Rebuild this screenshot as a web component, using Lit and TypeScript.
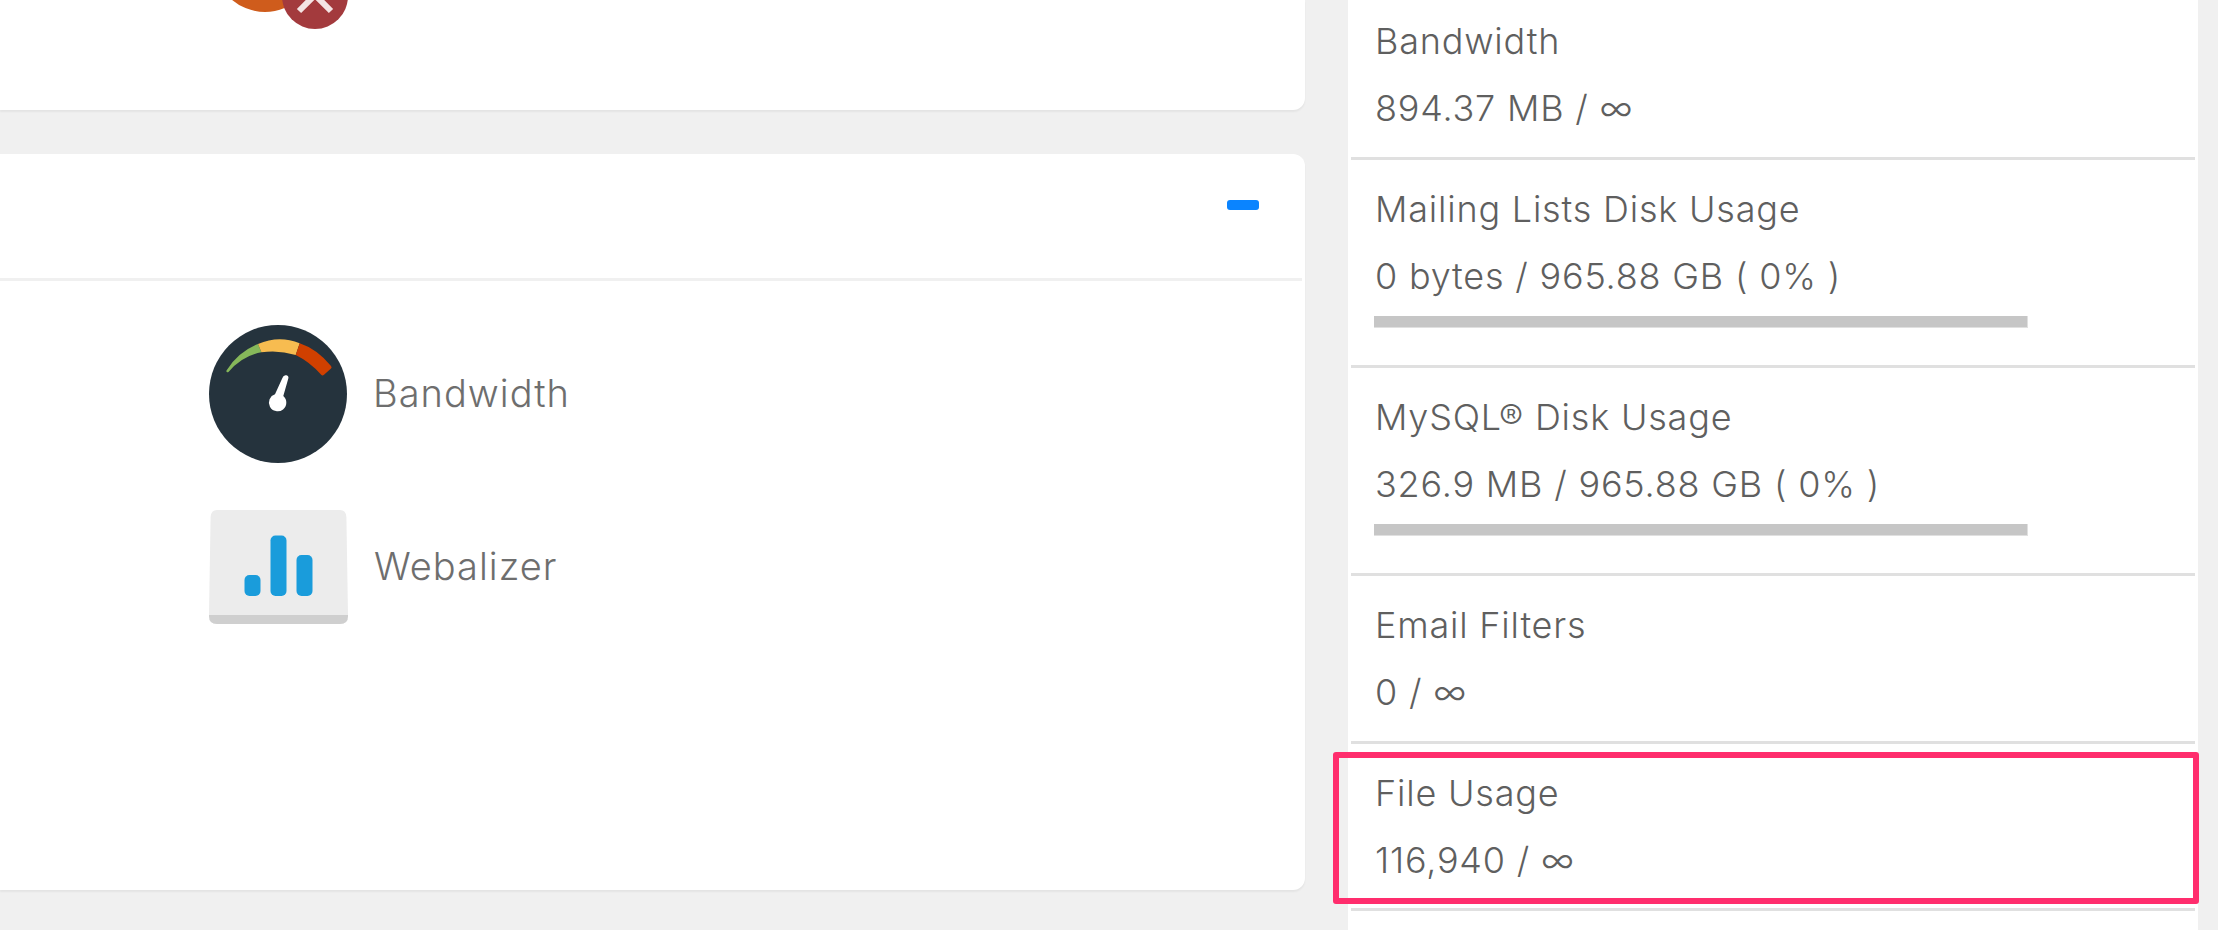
import { LitElement, html, css, svg } from "lit";
import { customElement } from "lit/decorators.js";

interface Stat { label: string; value: string; bar?: boolean; cls?: string; flagged?: boolean }

const STATS: Stat[] = [
  { label: "Bandwidth", value: "894.37 MB / ∞", cls: "first" },
  { label: "Mailing Lists Disk Usage", value: "0 bytes / 965.88 GB ( 0% )", bar: true },
  { label: "MySQL® Disk Usage", value: "326.9 MB / 965.88 GB ( 0% )", bar: true },
  { label: "Email Filters", value: "0 / ∞" },
  { label: "File Usage", value: "116,940 / ∞", flagged: true, cls: "filerow" },
  { label: "", value: "", cls: "last" },
];

@customElement("app-root")
export class AppRoot extends LitElement {
  static styles = css`
    :host {
      display: block;
      width: 2218px;
      height: 930px;
      overflow: hidden;
      background: #f0f0f0;
      font-family: Inter, "Liberation Sans", sans-serif;
    }
    .page { display: flex; gap: 43px; align-items: flex-start; }
    .main { width: 1305px; flex: none; display: flex; flex-direction: column; gap: 44px; }
    .card {
      background: #fff;
      box-shadow: 0 2px 2px rgba(0, 0, 0, 0.05);
      box-sizing: border-box;
    }
    .card-top { height: 110px; border-radius: 0 0 12px 0; }
    .clipped { display: block; margin-left: 210px; }
    .card-tools { height: 736px; border-radius: 0 12px 12px 0; }
    .head {
      box-sizing: border-box;
      height: 127px;
      margin-right: 3px;
      border-bottom: 3px solid #f0f0f0;
      display: flex;
      justify-content: flex-end;
      padding: 46px 43px 0 0;
    }
    .minus { width: 32px; height: 10px; border-radius: 3px; background: #0a84ff; }
    .tools { display: flex; flex-direction: column; gap: 47px; padding: 44px 0 0 209px; }
    .tool {
      display: flex;
      align-items: center;
      gap: 26px;
      font-size: 38px;
      font-weight: 300;
      letter-spacing: 1px;
      color: #6e6e6e;
    }
    .tool span { padding-bottom: 2px; }
    .tool svg { display: block; flex: none; }
    .side { width: 850px; flex: none; background: #fff; }
    .row {
      position: relative;
      margin: 0 3px;
      padding: 29px 0 29px 24px;
      border-bottom: 3px solid #e0e0e0;
      color: #5f5f5f;
      font-size: 36px;
      font-weight: 300;
      letter-spacing: 0.8px;
      line-height: 40px;
    }
    .row.first { padding-top: 21px; }
    .row.filerow { padding-bottom: 28px; }
    .row.last { border-bottom: 0; height: 40px; }
    .value { margin-top: 27px; }
    .bar {
      box-sizing: border-box;
      width: 654px;
      height: 12px;
      margin: 20px 0 8px -1px;
      background: #c6c6c6;
      border-right: 1px solid #e0e0e0;
      border-bottom: 1px solid #e0e0e0;
    }
    .flag {
      position: absolute;
      left: -18px;
      right: -4px;
      top: 8px;
      bottom: 4px;
      border: 6px solid #ff2d6d;
      border-radius: 3px;
    }
  `;

  private gauge() {
    return svg`<svg width="138" height="138" viewBox="0 0 138 138">
      <circle cx="69" cy="69" r="69" fill="#25333d"/>
      <path d="M17.5 45.500 Q29 27 49 19 L52.400 27.300 Q33 31 19.500 47 Q17 48 17.500 45.500 Z" fill="#86b85a"/>
      <path d="M49 19 Q70 10 90.700 18.300 L86.700 30 Q70 24.800 52.400 27.300 Z" fill="#f7bc50"/>
      <path d="M90.700 18.300 Q108 24 122 41 Q123.200 42.500 122 43.500 L115 49.800 Q113.500 51 112.200 49.800 Q101 37 86.700 30 Z" fill="#d04000"/>
      <path d="M73.400 53 Q74.500 49.600 77.500 50.300 Q80 51 79.300 53.500 L74.300 71 A8.700 8.700 0 1 1 66 69.300 Z" fill="#fff"/>
    </svg>`;
  }

  private chart() {
    return svg`<svg width="139" height="114" viewBox="0 0 139 114">
      <path d="M8 0 H131 Q137 0 137.400 7 L139 105 V106 Q139 114 131 114 H8 Q0 114 0 106 V105 L1.600 7 Q2 0 8 0 Z" fill="#ececec"/>
      <path d="M0 105 H139 V106 Q139 114 131 114 H8 Q0 114 0 106 Z" fill="#cfcfcf"/>
      <rect x="35.500" y="65" width="16" height="21" rx="5" fill="#1a9cdb"/>
      <rect x="61.500" y="25.500" width="16" height="60.500" rx="5" fill="#1a9cdb"/>
      <rect x="87.500" y="45" width="16" height="41" rx="5" fill="#1a9cdb"/>
    </svg>`;
  }

  private clipped() {
    return svg`<svg class="clipped" width="150" height="30" viewBox="210 0 150 30">
      <circle cx="265" cy="-39" r="51" fill="#cf5c1c"/>
      <circle cx="315" cy="-4" r="33" fill="#a33a3d"/>
      <path d="M299 11 L315 -5 L331 11" fill="none" stroke="#f4e4e4" stroke-width="6"/>
    </svg>`;
  }

  render() {
    return html`<div class="page">
      <div class="main">
        <section class="card card-top">${this.clipped()}</section>
        <section class="card card-tools">
          <div class="head"><div class="minus"></div></div>
          <div class="tools">
            <div class="tool">${this.gauge()}<span>Bandwidth</span></div>
            <div class="tool">${this.chart()}<span>Webalizer</span></div>
          </div>
        </section>
      </div>
      <aside class="side">
        ${STATS.map(
          (s) => html`<div class="row ${s.cls ?? ""}">
            ${s.label ? html`<div>${s.label}</div><div class="value">${s.value}</div>` : ""}
            ${s.bar ? html`<div class="bar"></div>` : ""}
            ${s.flagged ? html`<div class="flag"></div>` : ""}
          </div>`
        )}
      </aside>
    </div>`;
  }
}
